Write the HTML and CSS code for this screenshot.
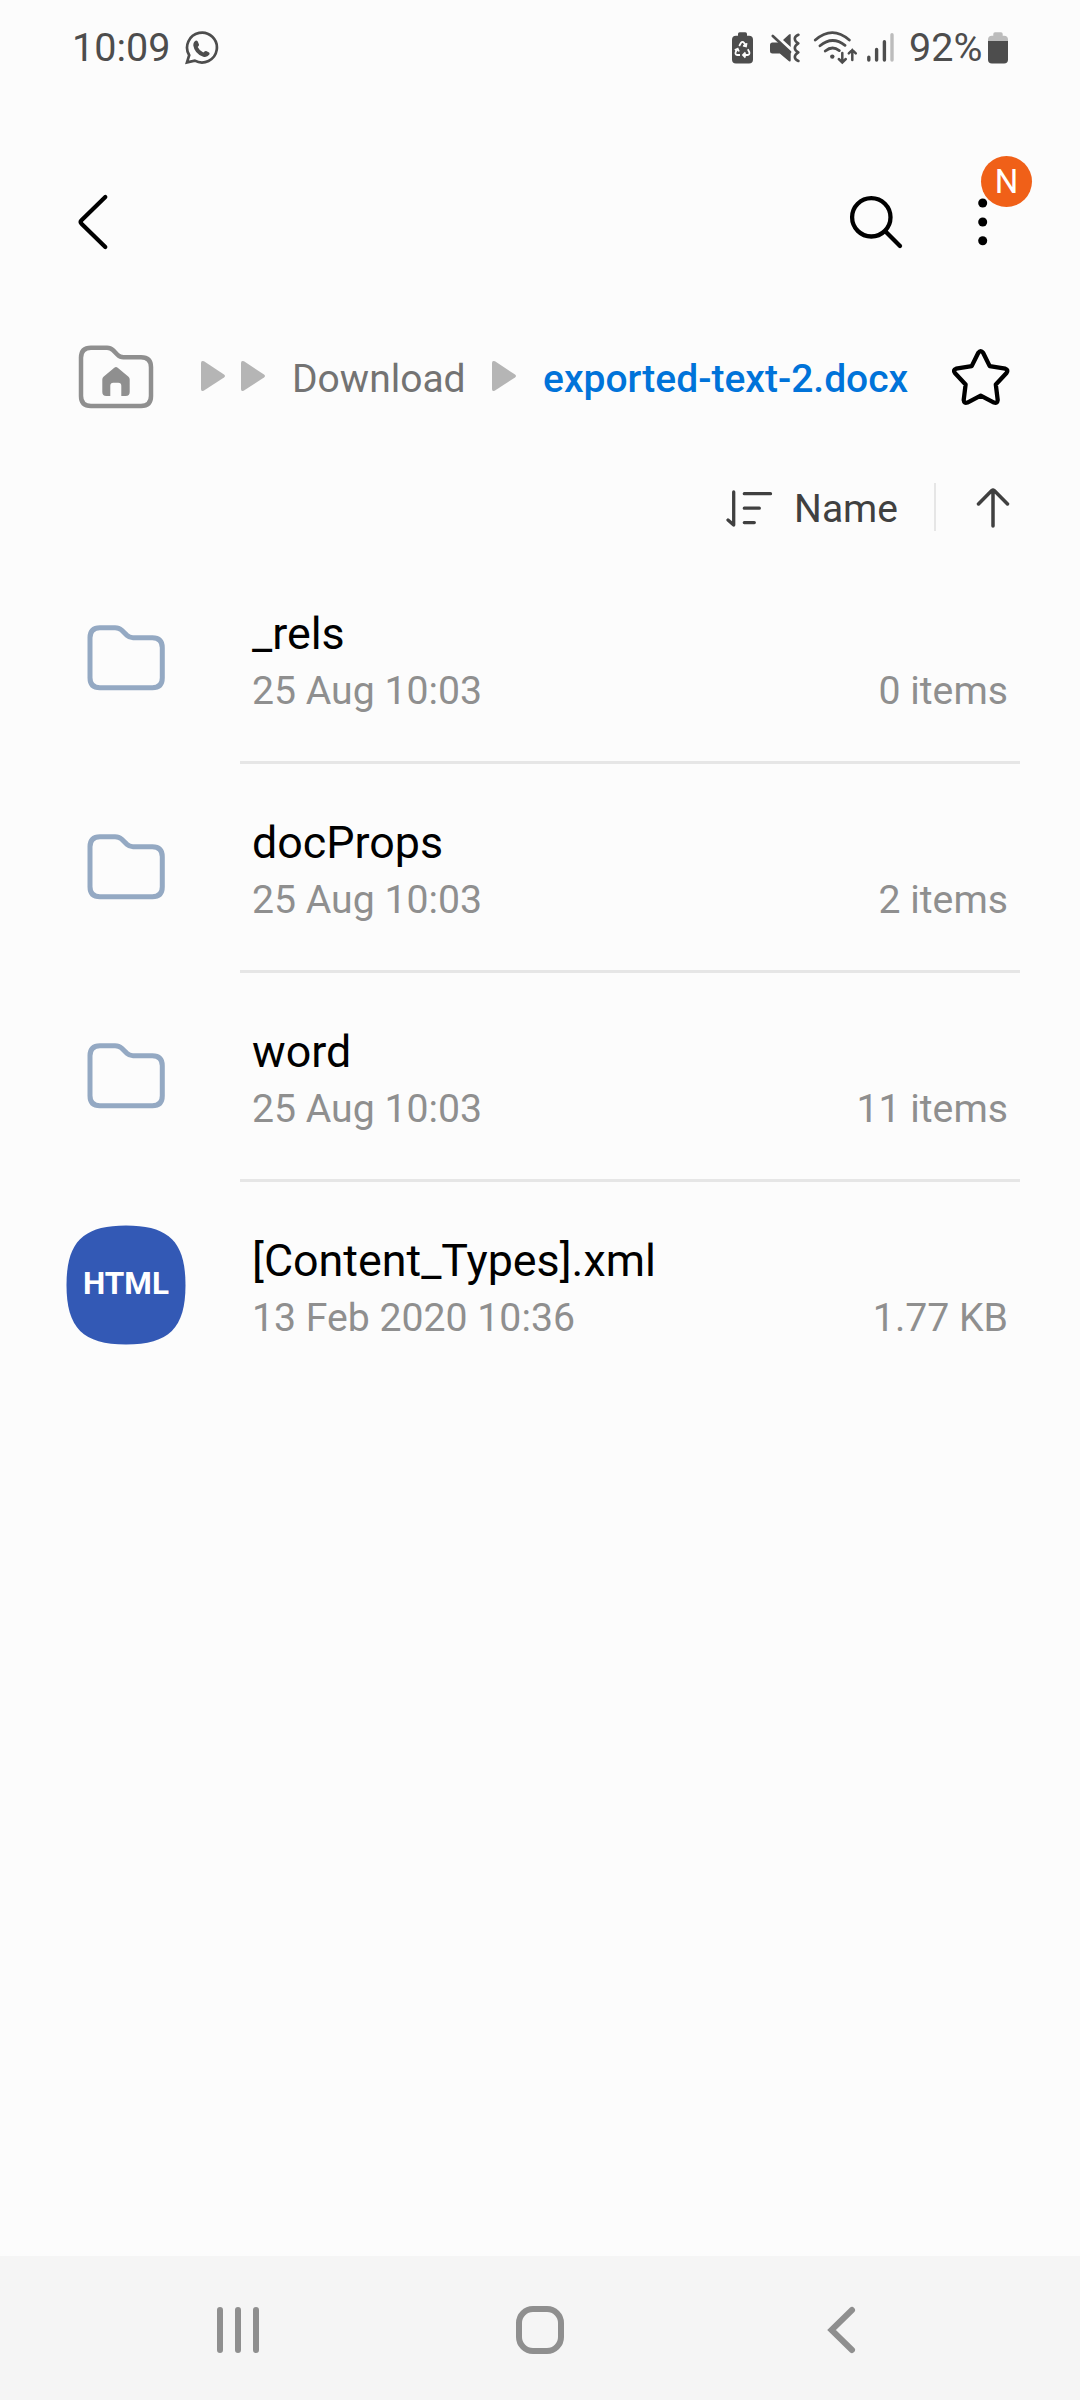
FILE: index.html
```html
<!DOCTYPE html>
<html lang="en">
<head>
	<meta charset="utf-8" />
	<title>My Files</title>
	<link rel="stylesheet" href="styles.css">
</head>
<body>
	<!-- status bar -->
	<div class="status">
		<span class="time">10:09</span>
		<svg class="chat" width="36" height="37" fill="none" stroke="#4d4d4d" stroke-width="2.7">
			<path d="M2 33.4L4.2 26.2A14.9 14.9 0 1 1 9.8 31.6Z" />
			<path fill="#4d4d4d" stroke="none" d="M9 13.2q2-3.2 3.8-.6l1.2 2.8q.3 1-1.3 2.6q1.7 3.7 5.6 5.5q1.6-2 2.8-1.5l3 1.5q1 .8.1 2.3q-2.2 2.9-6 1.9Q9.6 24.6 8.3 16.4Q8.2 14.4 9 13.2Z" />
		</svg>
		<div class="indicators">
			<svg class="saver" width="21" height="37">
				<path fill="#4d4d4d" d="M6 6.7V5q0-1.7 1.7-1.7H13.300q1.700 0 1.700 1.700V6.700H17q4 0 4 4V30.500q0 4-4 4H4q-4 0-4-4V10.700q0-4 4-4Z" />
				<path fill="none" stroke="#fcfcfc" stroke-width="1.8" d="M7.200 17L9 13.800Q10.500 11.800 12 13.800L14 17.200M15.800 20.200L17.300 23Q18 25.800 15.500 26H11.500M13.500 23.500L11 26L13.500 28.500M8 26H5.300Q2.800 25.600 3.700 23L5.500 19.800M2.800 21L5.700 19.600L7 22.500M14.600 14.200L14 17.400L11 16.600" />
			</svg>
			<svg class="mute" width="30" height="37">
				<path fill="#4d4d4d" d="M2.500 13.500H9.500L20.700 23.500V31.500Q20.500 33.300 19 32.200L9.800 24.500H2.500Q0 24.500 0 22V16Q0 13.500 2.500 13.500ZM13 11L19 5.500Q20.700 4.300 20.700 6V18Z" />
				<path fill="none" stroke="#4d4d4d" stroke-width="2.600" stroke-linecap="round" stroke-linejoin="round" d="M2.800 7L20 23M28.400 5.800Q24.600 7.500 24.800 10T28.300 14.300Q24.800 16.500 24.800 19T28.300 23.300Q24.800 25.500 24.800 28T28.400 32" />
			</svg>
			<svg class="wifi" width="46" height="37" fill="none" stroke="#4d4d4d" stroke-width="2.800" stroke-linecap="round">
				<path d="M3.300 11Q20.300-3.800 37.300 11M8 16.800Q20.300 6.400 33 16.300M13.300 22Q20.300 16.200 27.300 21.600" />
				<circle cx="20.300" cy="27.600" r="2.200" fill="#4d4d4d" stroke="none" />
				<path stroke-width="2.500" d="M30.300 24V33.300M26.800 30L30.300 33.400L33.800 30M40.300 21V31M36.800 24.300L40.300 20.900L43.800 24.300" />
			</svg>
			<svg class="signal" width="27" height="37" stroke="#4d4d4d" stroke-width="3.400" stroke-linecap="round">
				<path d="M1.800 28.200V31M9.600 20.500V31M17.400 12.700V31" />
				<path stroke="#bcbcbc" d="M25 5.700V31" />
			</svg>
			<span class="percent">92%</span>
			<svg class="battery" width="20" height="37">
				<path fill="#bcbcbc" d="M0 12V10.700Q0 6.700 4 6.700H5.300V5Q5.300 3.300 7 3.300H13Q14.700 3.300 14.700 5V6.700H16Q20 6.700 20 10.700V12Z" />
				<path fill="#4d4d4d" d="M0 12H20V30.500Q20 34.500 16 34.500H4Q0 34.500 0 30.500Z" />
			</svg>
		</div>
	</div>

	<!-- toolbar -->
	<div class="toolbar">
		<svg class="back" width="34" height="60" fill="none" stroke="#000" stroke-width="4.200" stroke-linecap="round" stroke-linejoin="round">
			<path d="M29.300 5L5.500 28.300Q3.800 30 5.500 31.700L29.300 55" />
		</svg>
		<svg class="search" width="58" height="60" fill="none" stroke="#000" stroke-width="4.300" stroke-linecap="round">
			<circle cx="25.300" cy="25.300" r="19.200" />
			<path d="M39.300 39.300L54 54" />
		</svg>
		<div class="more">
			<svg width="14" height="60">
				<circle cx="6.700" cy="11" r="4.500" />
				<circle cx="6.700" cy="30" r="4.500" />
				<circle cx="6.700" cy="48.700" r="4.500" />
			</svg>
			<span class="badge">N</span>
		</div>
	</div>

	<!-- breadcrumb -->
	<div class="path">
		<svg class="home" width="78" height="71">
			<path fill="none" stroke="#8f8f8f" stroke-width="4.500" d="M14 4.700H30Q33.500 4.700 36 7.200L40.500 11.800Q43 14.300 46.500 14.300H64Q74 14.300 74 24.300V53Q74 63 64 63H14Q4 63 4 53V14.700Q4 4.700 14 4.700Z" />
			<path fill="#8f8f8f" d="M37.300 24.700Q39 23.300 40.700 24.700L51.500 33.800Q52.700 34.900 52.700 36.500V49Q52.700 53 48.700 53H44.300V42.700Q44.300 39.700 41.300 39.700H36.300Q33.300 39.700 33.300 42.700V53H29.300Q25.300 53 25.300 49V36.500Q25.300 34.900 26.500 33.800Z" />
		</svg>
		<svg class="arrow first" width="25" height="32"><path d="M0 3Q0 0 3 1.300L23 14.500Q25 16 23 17.500L3 30.500Q0 32 0 29Z" /></svg>
		<svg class="arrow second" width="25" height="32"><path d="M0 3Q0 0 3 1.300L23 14.500Q25 16 23 17.500L3 30.500Q0 32 0 29Z" /></svg>
		<span class="crumb">Download</span>
		<svg class="arrow third" width="25" height="32"><path d="M0 3Q0 0 3 1.300L23 14.500Q25 16 23 17.500L3 30.500Q0 32 0 29Z" /></svg>
		<span class="crumb current">exported-text-2.docx</span>
		<svg class="star" width="62" height="71" fill="none" stroke="#000" stroke-width="4.300" stroke-linejoin="round">
			<path d="M28.300 9.800Q30.700 6.400 33.100 9.800L39.700 23.100L55.300 25.700Q58.700 27 56.500 30L45.800 41.500L47.700 57Q47.300 60.800 44 59.600L30.700 52.600L17.400 59.600Q14.100 60.800 13.700 57L15.600 41.500L4.900 30Q2.700 27 6.100 25.700L21.700 23.100Z" />
		</svg>
	</div>

	<!-- sort -->
	<div class="sort">
		<svg class="by" width="48" height="40" fill="none" stroke="#404040" stroke-width="3.300" stroke-linecap="round" stroke-linejoin="round">
			<path d="M7.700 3V36L2 31M18.300 4.700H44.500M18.300 19.200H33.300M18.300 33.600H28.300" />
		</svg>
		<span class="label">Name</span>
		<span class="split"></span>
		<svg class="order" width="34" height="42" fill="none" stroke="#404040" stroke-width="3.500" stroke-linecap="round" stroke-linejoin="round">
			<path d="M17 3V39M2.500 17L15.800 3.500Q17 2.500 18.200 3.500L31.500 17" />
		</svg>
	</div>

	<!-- files -->
	<div class="list">
		<div class="row">
			<svg class="icon" width="120" height="120"><path class="folder" d="M34 29.700H49Q53 29.700 55.500 32L61 37.400Q63.500 39.700 67 39.700H86.300Q96.300 39.700 96.300 49.700V79.700Q96.300 89.700 86.300 89.700H34Q24 89.700 24 79.700V39.700Q24 29.700 34 29.700Z" /></svg>
			<div class="info">
				<div class="name">_rels</div>
				<div class="meta"><span>25 Aug 10:03</span><span>0 items</span></div>
			</div>
		</div>
		<div class="row">
			<svg class="icon" width="120" height="120"><path class="folder" d="M34 29.700H49Q53 29.700 55.500 32L61 37.400Q63.500 39.700 67 39.700H86.300Q96.300 39.700 96.300 49.700V79.700Q96.300 89.700 86.300 89.700H34Q24 89.700 24 79.700V39.700Q24 29.700 34 29.700Z" /></svg>
			<div class="info">
				<div class="name">docProps</div>
				<div class="meta"><span>25 Aug 10:03</span><span>2 items</span></div>
			</div>
		</div>
		<div class="row">
			<svg class="icon" width="120" height="120"><path class="folder" d="M34 29.700H49Q53 29.700 55.500 32L61 37.400Q63.500 39.700 67 39.700H86.300Q96.300 39.700 96.300 49.700V79.700Q96.300 89.700 86.300 89.700H34Q24 89.700 24 79.700V39.700Q24 29.700 34 29.700Z" /></svg>
			<div class="info">
				<div class="name">word</div>
				<div class="meta"><span>25 Aug 10:03</span><span>11 items</span></div>
			</div>
		</div>
		<div class="row">
			<svg class="icon" width="120" height="120">
				<path fill="#3359b5" d="M60 .5C103 .5 119.500 17 119.500 60S103 119.500 60 119.500S.5 103 .5 60S17 .5 60 .5Z" />
				<text class="type" x="60" y="69" text-anchor="middle">HTML</text>
			</svg>
			<div class="info">
				<div class="name">[Content_Types].xml</div>
				<div class="meta"><span>13 Feb 2020 10:36</span><span>1.77 KB</span></div>
			</div>
		</div>
	</div>

	<!-- navigation bar -->
	<div class="nav">
		<svg width="50" height="50"><path d="M8 5V45M26 5V45M44 5V45" /></svg>
		<svg width="50" height="50"><rect x="4" y="4" width="42" height="42" rx="14" /></svg>
		<svg width="50" height="50"><path d="M35 5L14.500 25L35 45" /></svg>
	</div>
</body>
</html>
```
FILE: styles.css
```css
* { margin:0; padding:0; box-sizing:border-box; }
body { display:flex; flex-direction:column; width:1080px; height:2400px; background:#fcfcfc; font-family:Roboto, sans-serif; font-size:39px; overflow:hidden; }
svg { display:block; flex:none; }
span { white-space:nowrap; }

.status { display:flex; align-items:center; height:95px; padding:0 72px; color:#4d4d4d; font-size:39.5px; }
.time { width:98px; }
.chat { margin-left:15px; }
.indicators { display:flex; align-items:center; margin-left:auto; }
.mute { margin-left:17px; }
.wifi { margin-left:12px; }
.signal { margin-left:9px; }
.percent { width:79px; margin-left:15px; }

.toolbar { display:flex; align-items:center; height:150px; margin-top:52px; padding:0 90px 0 76px; }
.search { margin-left:auto; }
.more { position:relative; margin-left:72px; }
.badge { position:absolute; left:5px; top:-36px; width:51px; height:51px; border-radius:50%; background:#f06018; color:#fff; font-size:33px; line-height:52px; text-align:center; }

.path { display:flex; align-items:center; height:163px; padding:0 68px 0 77px; }
.arrow { fill:#b5b5b5; margin-bottom:5px; }
.first { margin-left:46px; }
.second { margin-left:15px; }
.third { margin-left:27px; }
.crumb { width:173px; margin-left:26px; color:#737373; }
.current { width:auto; color:#0073d9; font-weight:500; }
.star { margin-left:auto; }

.sort { display:flex; align-items:center; justify-content:flex-end; height:95px; padding:2px 70px 0 0; color:#404040; }
.label { margin-left:20px; }
.split { width:2px; height:48px; margin:0 40px 3px 36px; background:#e6e6e6; }
.order { margin-bottom:2px; }

.list { flex:1; }
.row { display:flex; height:209px; padding:43px 60px 0 66px; }
.info { flex:1; height:166px; margin-left:54px; padding:7px 12px 0; border-bottom:3px solid #e6e6e6; }
.row:last-child .info { border-bottom:0; }
.name { color:#000; font-size:44.8px; line-height:57px; }
.meta { display:flex; justify-content:space-between; color:#8f8f8f; font-size:39.2px; line-height:59px; }
.folder { fill:none; stroke:#94a9c3; stroke-width:5; }
.type { fill:#fff; font-size:31.5px; font-weight:700; }

.nav { display:flex; align-items:center; justify-content:space-between; height:144px; padding:4px 213px 0 212px; background:#f5f5f5; }
.nav svg { fill:none; stroke:#8f8f8f; stroke-width:6; stroke-linecap:round; }
```
